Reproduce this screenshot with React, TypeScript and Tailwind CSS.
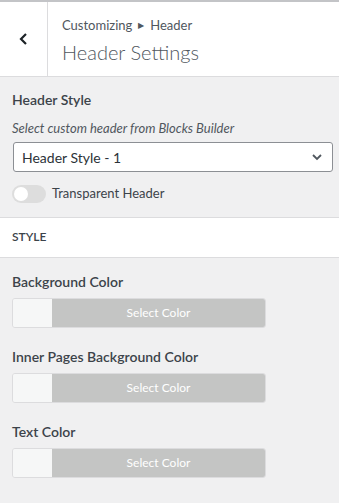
import React from 'react';

const font = { fontFamily: '"Segoe UI", Lato, "Noto Sans", sans-serif' };

const ColorField: React.FC<{ label: string }> = ({ label }) => (
  <div className="mb-[19px]">
    <div className="text-[14px] font-semibold text-[#3c434a] leading-[20px] mb-[6px]">{label}</div>
    <div className="flex w-[254px] h-[30px] rounded-[3px] border border-[#dcdcde] overflow-hidden">
      <div className="w-[39px] bg-[#f6f7f7]" />
      <div className="flex-1 bg-[#c4c5c4] flex items-center justify-center text-white text-[12px]">
        Select Color
      </div>
    </div>
  </div>
);

export default function App() {
  return (
    <div className="w-[339px] h-[503px] bg-[#f0f0f1] overflow-hidden" style={font}>
      <div className="border-t-[2px] border-[#c3c4c7] bg-white flex h-[77px] border-b border-b-[#dcdcde]">
        <button className="w-[48px] border-r border-[#dcdcde] flex items-center justify-center text-[#1d2327]">
          <svg width="12" height="14" viewBox="0 0 12 14" fill="none">
            <path d="M8 2 L3 7 L8 12" stroke="currentColor" strokeWidth="2.2" />
          </svg>
        </button>
        <div className="pl-[14px] pt-[14px]">
          <div className="text-[13px] text-[#50575e] leading-[18px] flex items-center">
            Customizing
            <span className="text-[8px] mx-[6px]">&#9654;</span>
            Header
          </div>
          <div className="text-[20px] font-light text-[#50575e] leading-[28px] mt-[4px]">Header Settings</div>
        </div>
      </div>

      <div className="px-[12px] pt-[13px]">
        <div className="text-[14px] font-semibold text-[#3c434a] leading-[20px]">Header Style</div>
        <div className="text-[13px] italic text-[#50575e] leading-[18px] mt-[9px]">
          Select custom header from Blocks Builder
        </div>
        <div className="mt-[5px] ml-[1px] h-[30px] w-[320px] bg-white border border-[#8c8f94] rounded-[3px] flex items-center justify-between pl-[8px] pr-[8px]">
          <span className="text-[14px] text-[#2c3338]">Header Style - 1</span>
          <svg width="14" height="14" viewBox="0 0 14 14" fill="none">
            <path d="M3 5 L7 9 L11 5" stroke="#50575e" strokeWidth="1.8" />
          </svg>
        </div>
        <div className="flex items-center mt-[12px] mb-[13px]">
          <div className="w-[34px] h-[18px] rounded-full bg-[#dddddd] relative">
            <div className="absolute left-[2px] top-[2px] w-[14px] h-[14px] rounded-full bg-white" />
          </div>
          <span className="ml-[6px] text-[13px] text-[#3c434a]">Transparent Header</span>
        </div>
      </div>

      <div className="bg-white border-y border-[#dcdcde] h-[41px] flex items-center px-[12px] text-[12px] font-semibold text-[#3c434a] uppercase">
        Style
      </div>

      <div className="px-[12px] pt-[14px]">
        <ColorField label="Background Color" />
        <ColorField label="Inner Pages Background Color" />
        <ColorField label="Text Color" />
      </div>
    </div>
  );
}
